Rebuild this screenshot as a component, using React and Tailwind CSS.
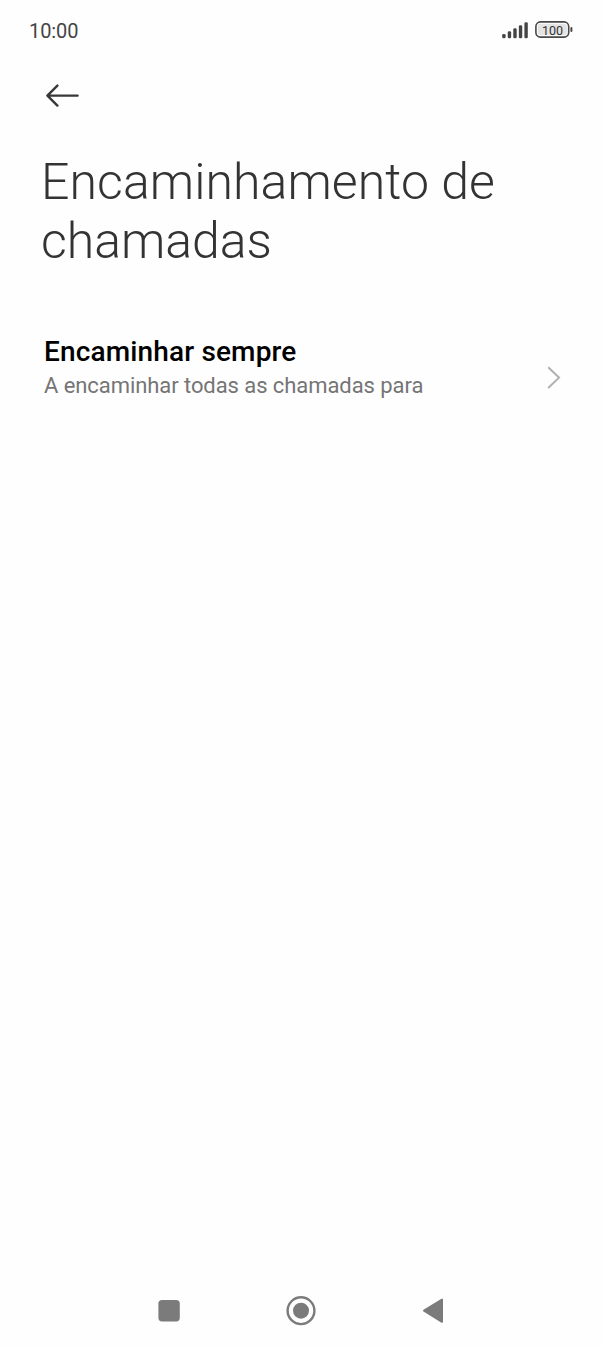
const bars = [4.2, 7, 10, 13, 16]

function StatusBar() {
  return (
    <header className="flex h-[60px] items-center justify-between pl-[29px] pr-8 text-[#444]">
      <span className="mt-0.5 text-xl font-[450] tracking-[-0.1px]">10:00</span>
      <svg width="71" height="18" viewBox="0 0 71 18">
        {bars.map((h, i) => (
          <rect key={h} x={0.2 + i * 5.55} y={17.2 - h} width="3.4" height={h} rx="1.3" fill="#444" />
        ))}
        <rect x="33.9" y="0.9" width="32.8" height="15.2" rx="4.6" fill="#fefefe" stroke="#484848" strokeWidth="1.6" />
        <rect x="35.8" y="2.8" width="29" height="11.4" rx="2.5" fill="#e4e4e4" />
        <rect x="68.4" y="6" width="2" height="5" rx="1" fill="#484848" />
        <text x="50.6" y="14" textAnchor="middle" fontSize="12.5" fill="#333">100</text>
      </svg>
    </header>
  )
}

export default function App() {
  return (
    <div className="flex h-[1346px] w-[605px] flex-col bg-[#fefefe] font-['Roboto',sans-serif]">
      <StatusBar />
      <button className="ml-[45px] mt-6 h-6 w-[34px]" aria-label="Voltar">
        <svg width="34" height="24" fill="none" stroke="#383838" strokeWidth="2.4" strokeLinecap="round" strokeLinejoin="round">
          <path d="M12.4 1.6 L2.4 11.6 L12.4 21.6 M2.4 11.6 H32.6" />
        </svg>
      </button>
      <h1 className="ml-[41px] mt-[45px] text-[50px] font-light leading-[59px] tracking-[0.06px] text-[#333]">
        Encaminhamento de
        <br />
        <span className="tracking-[-0.05px]">chamadas</span>
      </h1>
      <section className="mt-[65px] flex items-center justify-between px-11">
        <div>
          <h2 className="text-[28px] font-medium leading-8 tracking-[0.15px] text-black">Encaminhar sempre</h2>
          <p className="mt-0.5 text-[22px] leading-8 tracking-[-0.07px] text-[#757575]">A encaminhar todas as chamadas para</p>
        </div>
        <svg className="mt-[18px]" width="14" height="24" fill="none" stroke="#b0b0b0" strokeWidth="2">
          <path d="M1.2 1.2 L12 11.6 L1.2 22" />
        </svg>
      </section>
      <nav className="mt-auto flex h-[70px] items-center justify-between pl-[158px] pr-[161px]">
        <svg width="22" height="22" fill="#7b7b7b">
          <rect x="0.4" y="0" width="21.4" height="21.4" rx="3.6" />
        </svg>
        <svg width="30" height="30">
          <circle cx="15" cy="14.7" r="13.4" fill="none" stroke="#7b7b7b" strokeWidth="2.4" />
          <circle cx="15" cy="14.7" r="8" fill="#7b7b7b" />
        </svg>
        <svg width="22" height="26" fill="#7b7b7b" stroke="#7b7b7b" strokeWidth="2" strokeLinejoin="round">
          <path d="M20 1.6 V23.8 L2 12.7 Z" />
        </svg>
      </nav>
    </div>
  )
}
